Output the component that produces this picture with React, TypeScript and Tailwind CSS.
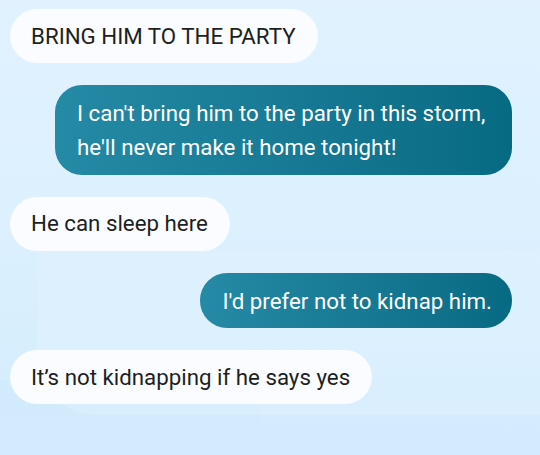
const messages = [
  { from: "them", text: "BRING HIM TO THE PARTY" },
  { from: "me", text: "I can't bring him to the party in this storm, he'll never make it home tonight!" },
  { from: "them", text: "He can sleep here" },
  { from: "me", text: "I'd prefer not to kidnap him." },
  { from: "them", text: "It’s not kidnapping if he says yes" },
];

export default function App() {
  return (
    <div className="relative w-[540px] h-[455px] overflow-hidden bg-gradient-to-b from-[#e1f2fe] via-[#dcf0fe] to-[#d2ecfd] font-['Roboto',sans-serif]">
      {/* faint background shapes */}
      <div className="absolute left-[-40px] top-[380px] w-[300px] h-[120px] rounded-[40px] bg-[#cfeafc]/50" />
      <div className="absolute left-[37px] top-[250px] w-[560px] h-[165px] rounded-tl-[10px] rounded-bl-[60px] bg-[#e4f3fe]/35" />
      <div className="absolute left-0 top-[418px] w-full h-[40px] bg-[#d2ecfd]/60" />

      <div className="relative flex flex-col gap-[22px] pt-[9px] pl-[10px] pr-[28px]">
        {messages.map((m, i) =>
          m.from === "me" ? (
            <div key={i} className="flex justify-end">
              <div className="max-w-[457px] rounded-[27px] bg-gradient-to-r from-[#258aa6] to-[#076a83] pl-[22px] pr-[20px] pt-[11px] pb-[10.5px] text-[22.3px] leading-[34px] text-white">
                {m.text}
              </div>
            </div>
          ) : (
            <div key={i} className="flex justify-start">
              <div className="rounded-[27px] bg-[#fafcff] pl-[21px] pr-[22px] pt-[9.5px] pb-[10.5px] text-[22.3px] leading-[34px] text-[#1e1f21]">
                {m.text}
              </div>
            </div>
          )
        )}
      </div>
    </div>
  );
}
